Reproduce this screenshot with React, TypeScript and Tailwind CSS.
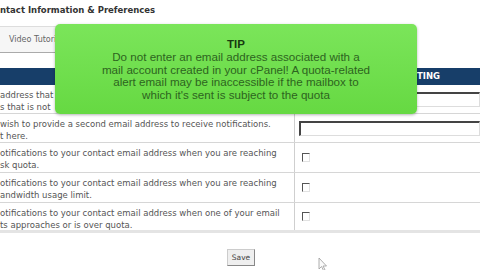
const ROWS = [
  {
    lines: ["address that", "s that is not"],
    control: "input",
    h: "h-[29px]",
  },
  {
    lines: ["wish to provide a second email address to receive notifications.", "t here."],
    control: "input",
    h: "h-[29px]",
  },
  {
    lines: ["otifications to your contact email address when you are reaching", "sk quota."],
    control: "checkbox",
    h: "h-[30px]",
  },
  {
    lines: ["otifications to your contact email address when you are reaching", "andwidth usage limit."],
    control: "checkbox",
    h: "h-[30px]",
  },
  {
    lines: ["otifications to your contact email address when one of your email", "ts approaches or is over quota."],
    control: "checkbox",
    h: "h-[30px]",
  },
] as const;

function Checkbox() {
  return (
    <div className="w-[8px] h-[9px] bg-white border-t border-l border-t-[#555] border-l-[#555] border-b border-r border-b-[#e2e2e2] border-r-[#e2e2e2]" />
  );
}

function TextBox() {
  return (
    <div className="w-full h-[15px] bg-white border-t-2 border-l-2 border-t-[#444] border-l-[#444] border-b border-r border-b-[#ddd] border-r-[#ddd]" />
  );
}

export default function App() {
  return (
    <div className="relative w-[480px] h-[270px] overflow-hidden bg-white font-['DejaVu_Sans',sans-serif] text-[#555]">
      <div className="pt-[4px] h-[26px] text-[8.5px] leading-[12px] font-bold text-[#333] whitespace-nowrap">
        ntact Information &amp; Preferences
      </div>

      <div className="w-[240px] h-[27px] bg-[#f6f6f6] border-t border-b border-t-[#ddd] border-b-[#aaa] flex items-center pl-[9px]">
        <span className="text-[8px] text-[#666] whitespace-nowrap">Video Tutorials</span>
      </div>

      <div className="h-[15px]" />

      <div className="flex h-[17px] bg-[#173e69] text-white text-[8.5px] font-bold items-center">
        <div className="w-[295px]" />
        <div className="flex-1 pl-[104px]">SETTING</div>
      </div>

      <div className="flex flex-col">
        {ROWS.map((row, i) => (
          <div
            key={i}
            className={`flex ${row.h} ${i === ROWS.length - 1 ? "border-b-[3px] border-b-[#e4e4e4]" : "border-b border-b-[#d6d6d6]"}`}
          >
            <div className="w-[295px] shrink-0 border-r border-r-[#cfcfcf] pt-[4px] text-[8.5px] leading-[12px] whitespace-nowrap overflow-hidden">
              {row.lines.map((l) => (
                <div key={l}>{l}</div>
              ))}
            </div>
            <div className="flex-1 flex items-center pl-[4px]">
              {row.control === "input" ? <TextBox /> : <div className="pl-[3px]"><Checkbox /></div>}
            </div>
          </div>
        ))}
      </div>

      <div className="flex justify-center pt-[16px] pl-[2px]">
        <button className="h-[17px] px-[4px] bg-[#efefef] border border-t-[#ccc] border-l-[#ccc] border-b-[#888] border-r-[#888] text-[7.5px] text-[#444]">
          Save
        </button>
      </div>

      <div className="absolute left-[55px] top-[24px] w-[362px] h-[90px] rounded-[5px] bg-gradient-to-b from-[#7be55a] to-[#66d942] shadow-[0_1px_3px_rgba(0,0,0,0.3)] pt-[14px] text-center font-['Liberation_Sans',Arial,sans-serif]">
        <div className="text-[11.5px] leading-[13px] font-bold text-[#173a10]">TIP</div>
        <div className="text-[11.6px] leading-[12.7px] text-[#2d6420]">
          <div>Do not enter an email address associated with a</div>
          <div>mail account created in your cPanel! A quota-related</div>
          <div>alert email may be inaccessible if the mailbox to</div>
          <div>which it&apos;s sent is subject to the quota</div>
        </div>
      </div>

      <svg className="absolute left-[318px] top-[257px]" width="10" height="14" viewBox="0 0 10 14">
        <path d="M1 1 L1 12 L3.5 9.5 L5.5 13.5 L7 12.8 L5 9 L8.5 9 Z" fill="#fafafa" stroke="#9a9a9a" strokeWidth="0.8" />
      </svg>
    </div>
  );
}
